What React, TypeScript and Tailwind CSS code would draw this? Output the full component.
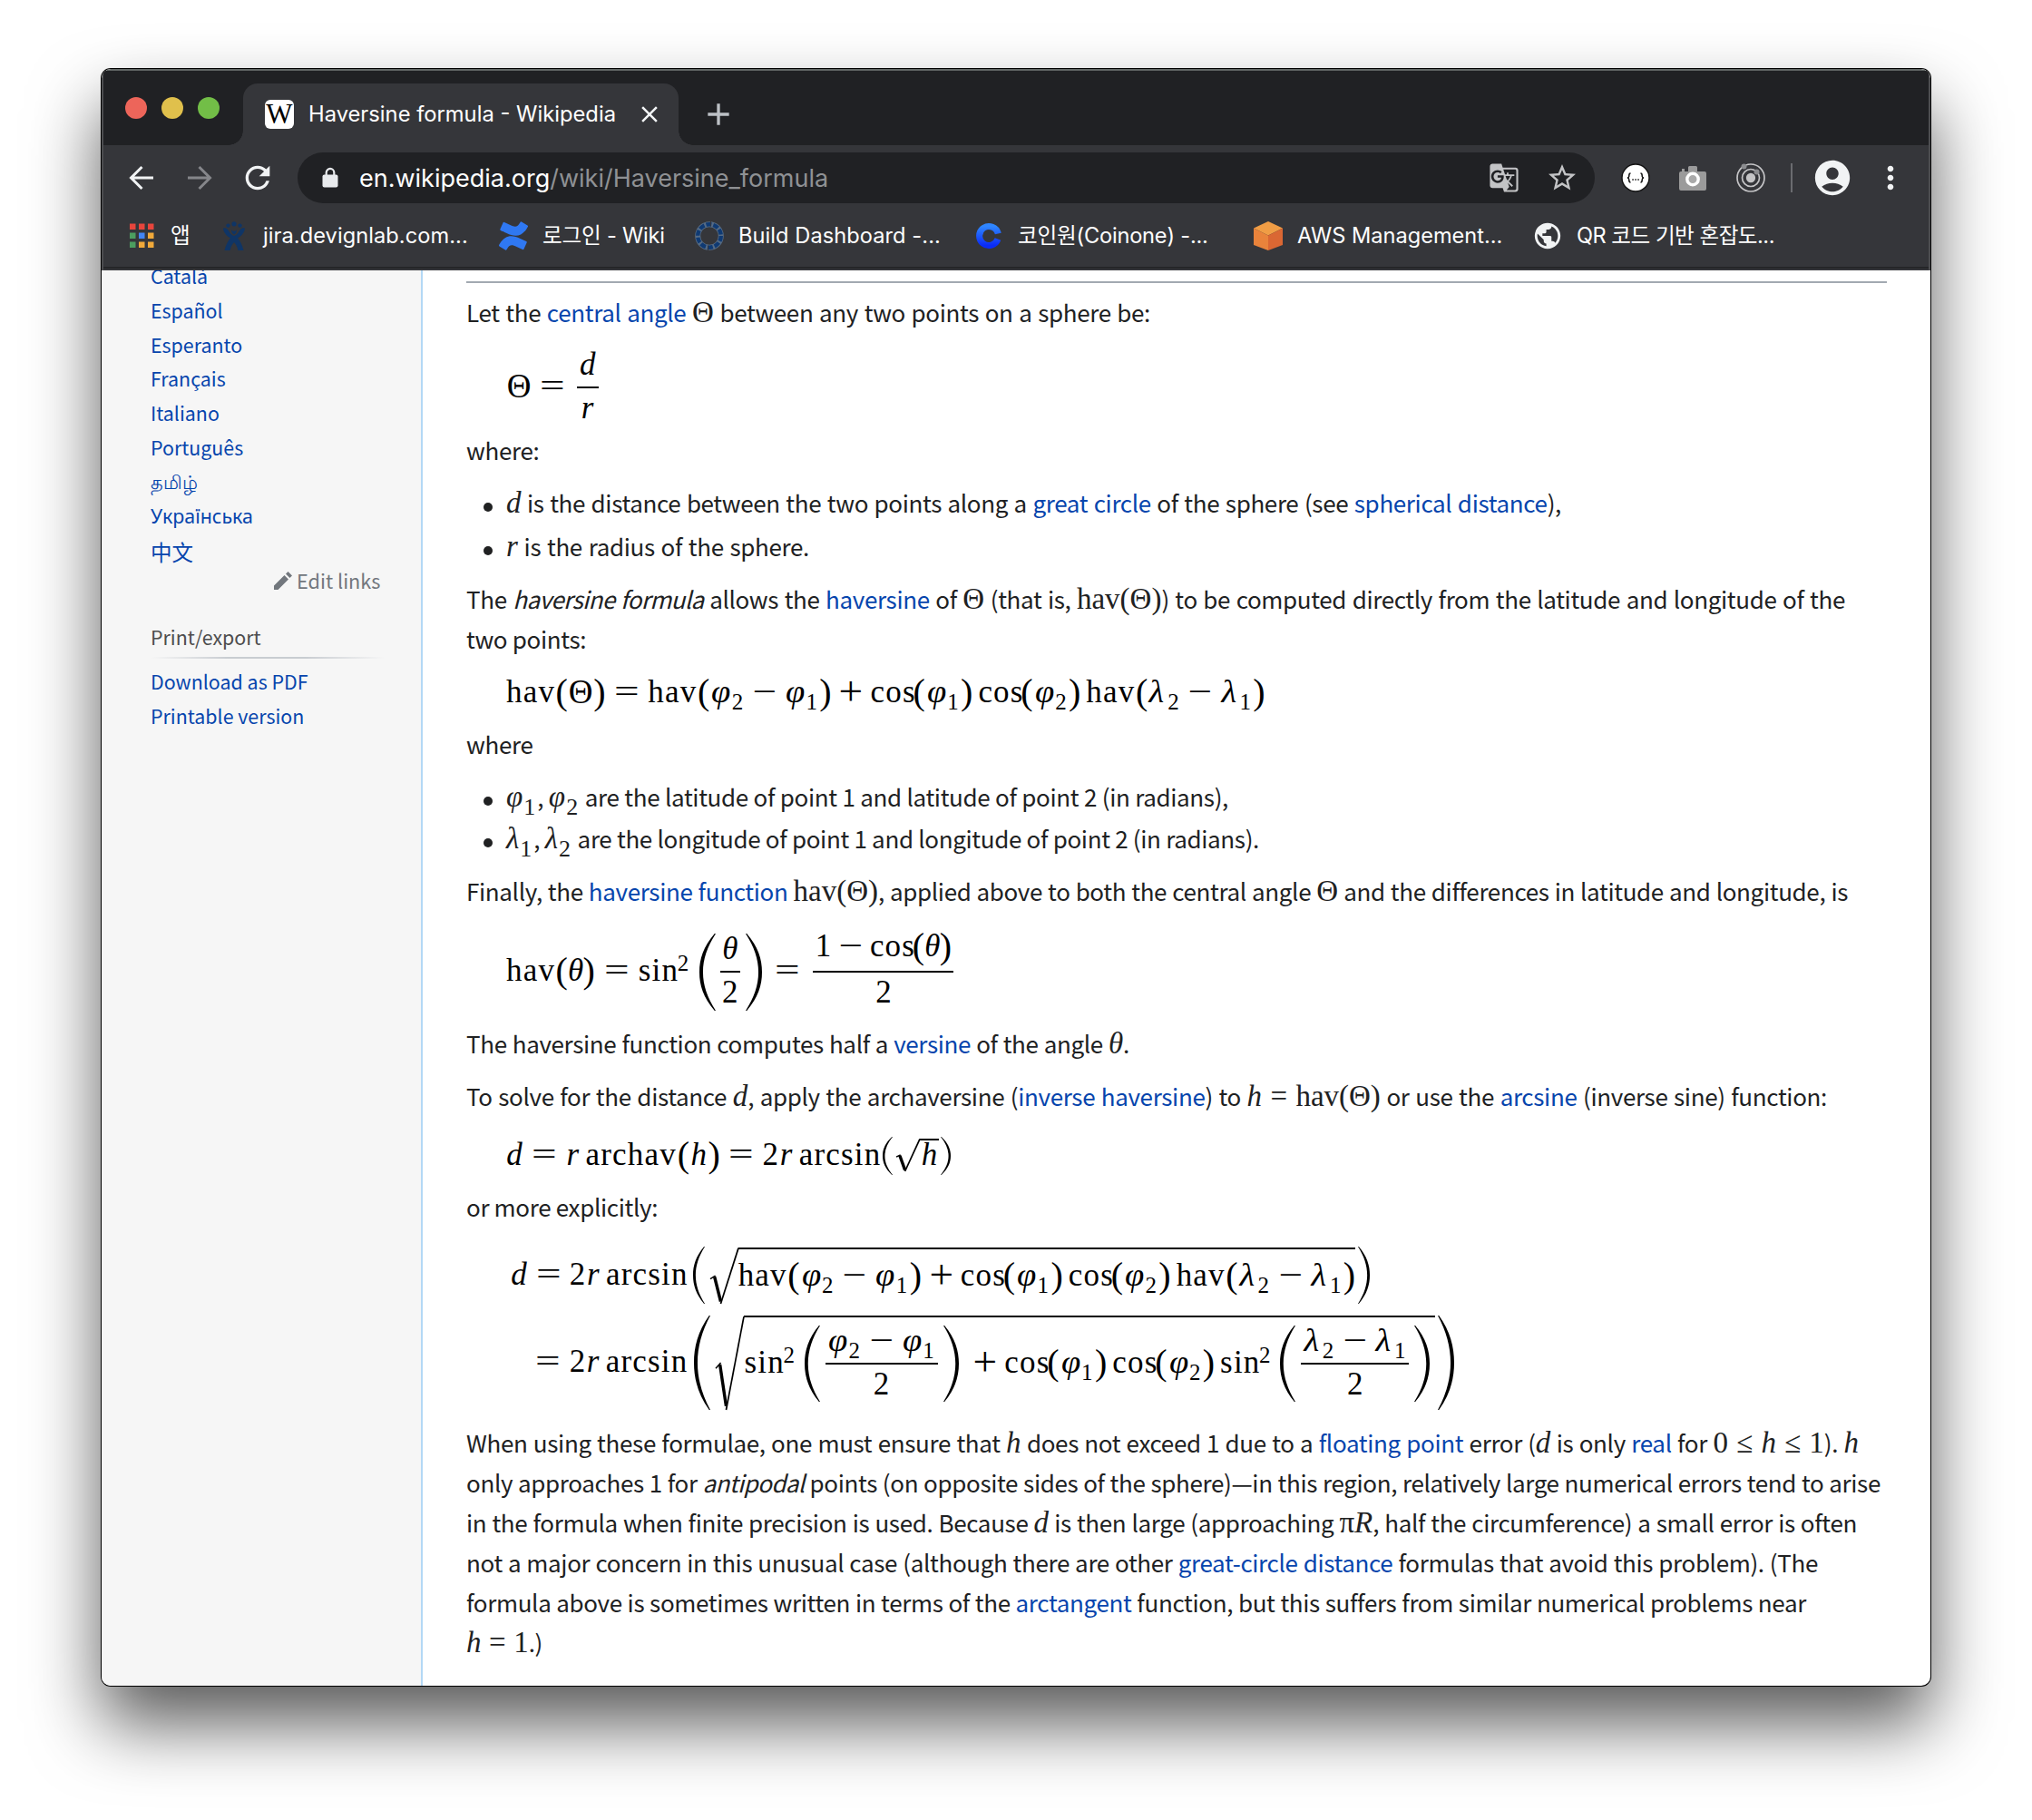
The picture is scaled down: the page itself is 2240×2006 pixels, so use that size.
import type { ReactNode } from 'react';
import { MdAccountCircle, MdAdd, MdClose, MdGTranslate, MdMoreVert, MdPublic, MdRefresh, MdStarBorder } from 'react-icons/md';
import { SiConfluence } from 'react-icons/si';

type Kids = { children?: ReactNode };

/* ---------- browser chrome ---------- */

function TabStrip() {
  return (
    <div className="flex h-[82px] bg-[#202124] pl-6">
      <div className="flex items-center gap-4">
        <span className="size-6 rounded-full bg-[#ed655a]" />
        <span className="size-6 rounded-full bg-[#e0c04c]" />
        <span className="size-6 rounded-full bg-[#72be47]" />
      </div>
      <div className="relative ml-[26px] flex h-[68px] w-[480px] items-center self-end rounded-t-2xl bg-[#35363a] pl-6">
        <span className="absolute bottom-0 -left-4 size-4 bg-[radial-gradient(circle_at_0_0,transparent_15.5px,#35363a_16px)]" />
        <span className="absolute -right-4 bottom-0 size-4 bg-[radial-gradient(circle_at_100%_0,transparent_15.5px,#35363a_16px)]" />
        <span className="flex size-8 items-center justify-center rounded-md bg-white font-['Liberation_Serif',serif] text-[31px] leading-8 text-black">
          W
        </span>
        <span className="ml-4 w-[361px] text-[23.75px] whitespace-nowrap text-white">Haversine formula - Wikipedia</span>
        <MdClose className="size-[30px] text-[#f1f3f4]" />
      </div>
      <MdAdd className="mt-[28px] ml-6 size-10 text-[#bdc1c6]" />
    </div>
  );
}

function Arrow({ look }: { look: string }) {
  return (
    <svg viewBox="0 0 40 40" className={`size-10 ${look}`} fill="none" stroke="currentColor" strokeWidth="3">
      <path d="M20.500 8 8.500 20l12 12M8.500 20H33" />
    </svg>
  );
}

function Lock() {
  return (
    <svg viewBox="0 0 20 24" className="ml-[26px] h-6 w-5" fill="none">
      <rect x="1.5" y="8.5" width="17" height="14" rx="2" fill="#e8eaed" />
      <path d="M5.7 9V6.2a4.3 4.3 0 0 1 8.6 0V9" stroke="#e8eaed" strokeWidth="2.2" />
    </svg>
  );
}

function Toolbar() {
  return (
    <div className="flex h-[72px] items-center pl-[22px]">
      <div className="flex gap-6 text-[#f1f3f4]">
        <Arrow look="text-[#f1f3f4]" />
        <Arrow look="-scale-x-100 text-[#85868a]" />
        <MdRefresh className="size-10" />
      </div>
      <div className="ml-6 flex h-14 w-[1430px] items-center rounded-full bg-[#202124] pr-[18px]">
        <Lock />
        <span className="ml-[22px] pt-0.5 text-[27px] whitespace-nowrap text-[#8f9194]">
          <span className="text-white">en.wikipedia.org</span>/wiki/Haversine_formula
        </span>
        <MdGTranslate className="ml-auto size-[34px] text-[#c3c4c6]" />
        <MdStarBorder className="ml-[29px] size-9 text-[#c3c4c6]" />
      </div>
      <svg viewBox="0 0 32 32" className="ml-[29px] size-8">
        <circle cx="16" cy="16" r="15" fill="#fff" stroke="#111" strokeWidth="1.4" />
        <path
          d="M10.5 11c-2.2 0-1.5 2.4-1.8 3.6-.2.9-1 1.3-1.7 1.4.7.1 1.500.5 1.700 1.400.3 1.200-.4 3.600 1.800 3.600M21.500 11c2.200 0 1.500 2.400 1.800 3.600.2.9 1 1.300 1.700 1.400-.7.1-1.500.5-1.700 1.400-.3 1.200.4 3.600-1.800 3.600"
          fill="none"
          stroke="#111"
          strokeWidth="1.5"
        />
        <path d="M12.300 18h1.500M15.300 18h1.500M18.300 18h1.500" stroke="#111" strokeWidth="1.5" />
      </svg>
      <svg viewBox="0 0 32 32" className="ml-[31px] size-8">
        <path
          d="M4 9V6h3v3h4V4.500Q11 3 12.500 3h7Q21 3 21 4.500V9h8q2 0 2 2v17q0 2-2 2H3q-2 0-2-2V11q0-2 2-2z"
          fill="#9b9b9b"
        />
        <circle cx="16" cy="17.500" r="6.200" fill="#a9a9a9" stroke="#fff" strokeWidth="3.400" />
      </svg>
      <svg viewBox="0 0 32 32" className="ml-8 size-8" fill="none" stroke="#c4c4c6" strokeWidth="1.700">
        <circle cx="16" cy="16" r="15" />
        <circle cx="16" cy="16" r="9.500" />
        <circle cx="16" cy="16" r="4.300" fill="#c4c4c6" />
        <circle cx="8.500" cy="3.500" r="3" fill="#8b8c8f" stroke="none" />
        <circle cx="22.500" cy="9.500" r="3" fill="#8b8c8f" stroke="none" />
      </svg>
      <span className="ml-7 h-8 w-0.5 bg-[#6b6c70]" />
      <MdAccountCircle className="ml-[21px] size-[46px] text-[#f1f3f4]" />
      <MdMoreVert className="ml-[21px] size-10 text-[#f1f3f4]" />
    </div>
  );
}

const appDots = ['#e8453c', '#e8453c', '#e8453c', '#4c9e60', '#4285f4', '#f0a93a', '#4c9e60', '#f0a93a', '#f0a93a'];

function AppsIcon() {
  return (
    <svg viewBox="0 0 32 32" className="size-8">
      {appDots.map((c, i) => (
        <rect key={i} x={3 + (i % 3) * 10} y={2.5 + Math.floor(i / 3) * 10} width="6.500" height="6.500" fill={c} />
      ))}
    </svg>
  );
}

function JiraIcon() {
  return (
    <svg viewBox="0 0 32 32" className="size-8" fill="#0f3566">
      <circle cx="16" cy="2.800" r="2.600" />
      <circle cx="9.500" cy="4.600" r="2.200" />
      <circle cx="22.500" cy="4.600" r="2.200" />
      <path d="M4 7.500q4-1.500 6.500 3.500 2 4 5.500 5 3.500-1 5.500-5 2.500-5 6.500-3.500-.5 6.500-8 11 4.500 5 6.500 13.500h-6q-1.500-6-4.500-9-3 3-4.500 9H5.500q2-8.500 6.500-13.500-7.500-4.500-8-11z" />
      <path d="M13 9.500q3 2.500 6 0 0 3.500-3 5-3-1.500-3-5z" />
    </svg>
  );
}

function BambooIcon() {
  return (
    <svg viewBox="0 0 32 32" className="size-8" fill="none">
      <circle cx="16" cy="16" r="12.800" stroke="#566b84" strokeWidth="6" />
      <circle cx="16" cy="16" r="12.800" stroke="#0f3a73" strokeWidth="4.400" strokeDasharray="6.042 2" />
      <path d="M17.500 0v5.500M14.500 26.500V32" stroke="#35363a" strokeWidth="1" />
    </svg>
  );
}

function CoinoneIcon() {
  return (
    <svg viewBox="0 0 32 32" className="size-8" fill="none">
      <defs>
        <linearGradient id="coin" x1="0" y1="0" x2="0" y2="1">
          <stop offset="0" stopColor="#2f86ff" />
          <stop offset="1" stopColor="#0a2bf5" />
        </linearGradient>
      </defs>
      <path d="M26.300 13.500A10.500 10.500 0 1 0 26 19.500" stroke="url(#coin)" strokeWidth="7" />
    </svg>
  );
}

function AwsIcon() {
  return (
    <svg viewBox="0 0 32 32" className="size-8">
      <path d="M16 0 32 7.500 16 15.500 0 7.500z" fill="#f09d45" />
      <path d="M0 7.500 16 15.500V32L0 26z" fill="#e9833b" />
      <path d="M32 7.500 16 15.500V32l16-6z" fill="#da6733" />
    </svg>
  );
}

function Bookmark({ icon, label, box }: { icon: ReactNode; label: string; box: string }) {
  return (
    <div className={`flex shrink-0 items-center gap-4 ${box}`}>
      {icon}
      <span className="whitespace-nowrap">{label}</span>
    </div>
  );
}

function BookmarksBar() {
  return (
    <div className="flex h-16 items-center border-b-2 border-[#252628] pb-1.5 pl-[26px] text-[23.6px] text-white">
      <Bookmark icon={<AppsIcon />} label="앱" box="w-[102px]" />
      <Bookmark icon={<JiraIcon />} label="jira.devignlab.com..." box="w-[308px] tracking-[0.07px]" />
      <Bookmark icon={<SiConfluence className="size-8 text-[#2f78f2]" />} label="로그인 - Wiki" box="w-[216px] tracking-[-0.2px]" />
      <Bookmark icon={<BambooIcon />} label="Build Dashboard -..." box="w-[308px] tracking-[0.07px]" />
      <Bookmark icon={<CoinoneIcon />} label="코인원(Coinone) -..." box="w-[308px] tracking-[-0.2px]" />
      <Bookmark icon={<AwsIcon />} label="AWS Management..." box="w-[308px]" />
      <Bookmark
        icon={<MdPublic className="-m-px size-[34px] text-[#f1f3f4]" />}
        label="QR 코드 기반 혼잡도..."
        box="w-[308px] tracking-[-0.5px]"
      />
    </div>
  );
}

/* ---------- sidebar ---------- */

const languages = ['Català', 'Español', 'Esperanto', 'Français', 'Italiano', 'Português'];

function Pencil() {
  return (
    <svg viewBox="0 0 20 20" className="mr-[5px] size-5" fill="#72777d">
      <path d="M0 15.500 11.500 4 16 8.500 4.500 20H0zM13 2.600 15.600 0 20 4.400 17.400 7z" />
    </svg>
  );
}

function Sidebar() {
  return (
    <aside className="w-[354px] shrink-0 overflow-hidden border-r-2 border-[#b3d8f5] bg-[#f6f6f6] pl-[54px] text-[21.4px] leading-[37.8px] text-[#0645ad]">
      <ul className="-mt-[13px]">
        {languages.map((l) => (
          <li key={l}>{l}</li>
        ))}
        <li className="h-[37.8px] font-['Noto_Sans',sans-serif]">தமிழ்</li>
        <li className="h-[37.8px] font-['Noto_Sans',sans-serif]">Українська</li>
        <li className="h-[37.8px] pt-[3px] font-['Noto_Sans_CJK_SC',sans-serif] text-[23.5px]">中文</li>
      </ul>
      <div className="-mt-1 ml-[136px] flex items-center text-[21.7px] text-[#72777d]">
        <Pencil />
        Edit links
      </div>
      <h3 className="mt-6 text-[#4d4d4d]">Print/export</h3>
      <div className="mt-[3px] h-0.5 w-[258px] bg-[linear-gradient(to_right,transparent,#c8ccd1_33%,#c8ccd1_66%,transparent)]" />
      <ul className="mt-1.5">
        <li>Download as PDF</li>
        <li>Printable version</li>
      </ul>
    </aside>
  );
}

/* ---------- article text ---------- */

function Line({ w, children }: Kids & { w: string }) {
  return (
    <div className={`h-11 leading-[44px] tracking-[-0.35px] whitespace-nowrap [text-align-last:justify] ${w}`}>{children}</div>
  );
}

function Item({ w, children }: Kids & { w: string }) {
  return (
    <li className="flex">
      <span className="mt-[22px] mr-[15px] ml-[19px] size-2.5 shrink-0 rounded-full bg-[#202122]" />
      <Line w={w}>{children}</Line>
    </li>
  );
}

const A = ({ children }: Kids) => <a className="text-[#0645ad]">{children}</a>;
const Em = ({ children }: Kids) => <i className="tracking-[-0.6px]">{children}</i>;
const M = ({ children }: Kids) => (
  <span className="font-['Liberation_Serif',serif] text-[33px] leading-[0] tracking-normal">{children}</span>
);
const LowSub = ({ children }: Kids) => (
  <span className="relative top-[9px] mr-0.5 ml-px text-[26px] leading-[0]">{children}</span>
);

/* ---------- display math ---------- */

const Block = ({ box, children }: Kids & { box: string }) => (
  <div className={`flex items-center pl-11 font-['Liberation_Serif',serif] text-[35px] text-black ${box}`}>{children}</div>
);
/* a stretch of symbols whose math axis sits on the block's centre line */
const Run = ({ children }: Kids) => <span className="flex h-11 -translate-y-px leading-[44px]">{children}</span>;
const Fn = ({ w, children }: Kids & { w: string }) => (
  <span className={`block tracking-[0.034em] whitespace-nowrap ${w}`}>{children}</span>
);
const Sym = ({ w, children }: Kids & { w: string }) => <span className={`block text-center ${w}`}>{children}</span>;
const It = ({ w, children }: Kids & { w: string }) => <span className={`block text-center italic ${w}`}>{children}</span>;
const Par = ({ children }: Kids) => (
  <span className="flex w-[0.389em] justify-center">
    <span className="text-[40px]">{children}</span>
  </span>
);
const Eq = () => (
  <span className="mx-[0.278em] block w-[0.778em] text-center">
    <span className="inline-block scale-x-[1.4]">=</span>
  </span>
);
const Minus = () => (
  <span className="mx-[0.222em] block w-[0.778em] text-center">
    <span className="inline-block scale-x-[1.35]">−</span>
  </span>
);
const Plus = () => (
  <span className="mx-[0.222em] block w-[0.778em] text-center">
    <span className="inline-block origin-[50%_57%] scale-[1.35]">+</span>
  </span>
);
const Theta = () => (
  <span className="flex w-[0.8em] justify-center">
    <span className="text-[37px]">Θ</span>
  </span>
);
const Sub = ({ children }: Kids) => (
  <span className="block w-[0.42em] translate-y-[8px]">
    <span className="text-[25px]">{children}</span>
  </span>
);
const Sup = ({ children }: Kids) => (
  <span className="block w-[0.404em] -translate-y-[11px]">
    <span className="text-[25px]">{children}</span>
  </span>
);
const Phi = ({ n }: { n: string }) => (
  <>
    <span className="block w-[0.695em] origin-left scale-x-110 pl-[0.05em] italic">φ</span>
    <Sub>{n}</Sub>
  </>
);
const Lam = ({ n }: { n: string }) => (
  <>
    <span className="block w-[0.625em] origin-left scale-x-110 pl-[0.04em] italic">λ</span>
    <Sub>{n}</Sub>
  </>
);

function Big({ box, right = false }: { box: string; right?: boolean }) {
  return (
    <svg viewBox="0 0 100 1000" preserveAspectRatio="none" className={`shrink-0 ${right ? '-scale-x-100' : ''} ${box}`}>
      <path d="M93 0C24 170 0 330 0 500s24 330 93 500h7C48 830 22 670 22 500S48 170 100 0z" fill="#000" />
    </svg>
  );
}

function Frac({ w, num, den, lift = '-translate-y-[2px]' }: { w: string; num: ReactNode; den: ReactNode; lift?: string }) {
  return (
    <span className={`flex flex-col items-center leading-[44px] ${w}`}>
      <span className={`flex h-11 ${lift}`}>{num}</span>
      <span className="h-0.5 w-full bg-black" />
      <span className="flex h-11">{den}</span>
    </span>
  );
}

function Sqrt({ h, tick, children }: Kids & { h: string; tick: string }) {
  return (
    <span className={`flex ${h}`}>
      <svg viewBox="0 0 100 100" preserveAspectRatio="none" className={`h-full overflow-visible ${tick}`} fill="none" stroke="#000">
        <path d="M0 56 18 50" strokeWidth="1.500" vectorEffect="non-scaling-stroke" />
        <path d="M15 52 37 96" strokeWidth="3.400" vectorEffect="non-scaling-stroke" />
        <path d="M37 100 100 1" strokeWidth="1.700" vectorEffect="non-scaling-stroke" />
      </svg>
      <span className="flex h-full items-center border-t-2 border-black">{children}</span>
    </span>
  );
}

const CosCos = () => (
  <>
    <Fn w="w-[1.338em]">cos</Fn>
    <Par>(</Par>
    <Phi n="1" />
    <Par>)</Par>
    <Fn w="ml-[0.167em] w-[1.338em]">cos</Fn>
    <Par>(</Par>
    <Phi n="2" />
    <Par>)</Par>
    <span className="w-[0.167em]" />
  </>
);

const HavSum = () => (
  <Run>
    <Fn w="w-[1.556em]">hav</Fn>
    <Par>(</Par>
    <Phi n="2" />
    <Minus />
    <Phi n="1" />
    <Par>)</Par>
    <Plus />
    <CosCos />
    <Fn w="w-[1.556em]">hav</Fn>
    <Par>(</Par>
    <Lam n="2" />
    <Minus />
    <Lam n="1" />
    <Par>)</Par>
  </Run>
);

const TwoRArcsin = () => (
  <>
    <Sym w="w-[0.5em]">2</Sym>
    <It w="w-[0.479em]">r</It>
    <Fn w="ml-[0.167em] w-[2.564em]">arcsin</Fn>
  </>
);

function Article() {
  return (
    <main className="w-[1566px] pt-3 text-[26px] text-[#202122]">
      <div className="h-0.5 w-full bg-[#a2a9b1]" />
      <div className="h-[10px]" />
      <Line w="w-[754px]">
        Let the <A>central angle</A> <M>Θ</M> between any two points on a sphere be:
      </Line>
      <Block box="h-[108px] pt-[14px]">
        <Run>
          <Theta />
          <Eq />
        </Run>
        <Frac w="ml-[3px] w-6" num={<It w="">d</It>} den={<It w="">r</It>} />
      </Block>
      <Line w="w-[80px]">where:</Line>
      <ul className="mt-[14px] space-y-1">
        <Item w="w-[1163px]">
          <M><i>d</i></M> is the distance between the two points along a <A>great circle</A> of the sphere (see{' '}
          <A>spherical distance</A>),
        </Item>
        <Item w="w-[334px]">
          <M><i>r</i></M> is the radius of the sphere.
        </Item>
      </ul>
      <div className="mt-[14px]">
        <Line w="w-[1520px]">
          The <Em>haversine formula</Em> allows the <A>haversine</A> of <M>Θ</M> (that is, <M>hav(Θ)</M>) to be computed directly
          from the latitude and longitude of the
        </Line>
        <Line w="w-[132px]">two points:</Line>
      </div>
      <Block box="h-[72px] pt-1">
        <Run>
          <Fn w="w-[1.556em]">hav</Fn>
          <Par>(</Par>
          <Theta />
          <Par>)</Par>
          <Eq />
        </Run>
        <HavSum />
      </Block>
      <Line w="w-[73px]">where</Line>
      <ul className="mt-[14px] space-y-0.5">
        <Item w="w-[796px]">
          <M><i>φ</i><LowSub>1</LowSub></M>, <M><i>φ</i><LowSub>2</LowSub></M> are the latitude of point 1 and latitude of point 2
          (in radians),
        </Item>
        <Item w="w-[830px]">
          <M><i>λ</i><LowSub>1</LowSub></M>, <M><i>λ</i><LowSub>2</LowSub></M> are the longitude of point 1 and longitude of point
          2 (in radians).
        </Item>
      </ul>
      <div className="mt-[14px]">
        <Line w="w-[1523px]">
          Finally, the <A>haversine function</A> <M>hav(Θ)</M>, applied above to both the central angle <M>Θ</M> and the
          differences in latitude and longitude, is
        </Line>
      </div>
      <Block box="h-[124px] pt-[10px]">
        <Run>
          <Fn w="w-[1.556em]">hav</Fn>
          <Par>(</Par>
          <It w="w-[0.469em]">θ</It>
          <Par>)</Par>
          <Eq />
          <Fn w="ml-px w-[1.228em]">sin</Fn>
          <Sup>2</Sup>
        </Run>
        <Big box="ml-[10px] h-[85px] w-[18px]" />
        <Frac w="ml-[5px] w-[22px]" num={<It w="">θ</It>} den="2" />
        <Big box="ml-[6px] h-[85px] w-[18px]" right />
        <span className="ml-[5px]">
          <Run>
            <Eq />
          </Run>
        </span>
        <Frac
          w="ml-[5px] w-[155px]"
          lift="-translate-y-[5px]"
          num={
            <>
              <Sym w="w-[0.5em]">1</Sym>
              <Minus />
              <Fn w="w-[1.338em]">cos</Fn>
              <Par>(</Par>
              <It w="w-[0.469em]">θ</It>
              <Par>)</Par>
            </>
          }
          den="2"
        />
      </Block>
      <Line w="w-[731px]">
        The haversine function computes half a <A>versine</A> of the angle <M><i>θ</i></M>.
      </Line>
      <div className="mt-[14px]">
        <Line w="w-[1500px]">
          To solve for the distance <M><i>d</i></M>, apply the archaversine (<A>inverse haversine</A>) to{' '}
          <M><i>h</i> = hav(Θ)</M> or use the <A>arcsine</A> (inverse sine) function:
        </Line>
      </div>
      <Block box="h-[78px] pt-[9px]">
        <Run>
          <It w="w-[0.52em]">d</It>
          <Eq />
          <It w="w-[0.479em]">r</It>
          <Fn w="ml-[0.167em] w-[2.89em]">archav</Fn>
          <Par>(</Par>
          <It w="w-[0.576em]">h</It>
          <Par>)</Par>
          <Eq />
          <TwoRArcsin />
        </Run>
        <Big box="ml-[3px] h-[42px] w-[11px]" />
        <span className="ml-1 -translate-y-px">
          <Sqrt h="h-9" tick="w-[26px]">
            <Run>
              <It w="w-[0.576em]">h</It>
            </Run>
          </Sqrt>
        </span>
        <Big box="ml-[2px] h-[42px] w-[11px]" right />
      </Block>
      <Line w="w-[211px]">or more explicitly:</Line>
      <Block box="h-24 pt-[11px]">
        <span className="ml-[5px]">
          <Run>
            <It w="w-[0.52em]">d</It>
            <Eq />
            <TwoRArcsin />
          </Run>
        </span>
        <Big box="ml-[6px] h-[63px] w-[13px]" />
        <span className="ml-1.5">
          <Sqrt h="h-[62px]" tick="w-[31px]">
            <HavSum />
          </Sqrt>
        </span>
        <Big box="ml-[3px] h-[63px] w-[13px]" right />
      </Block>
      <Block box="h-[108px]">
        <span className="ml-[23px]">
          <Run>
            <Eq />
            <TwoRArcsin />
          </Run>
        </span>
        <Big box="ml-[8px] h-[104px] w-[18px]" />
        <span className="ml-1.5">
          <Sqrt h="h-[104px]" tick="w-[31px]">
            <Run>
              <Fn w="w-[1.228em]">sin</Fn>
              <Sup>2</Sup>
            </Run>
            <Big box="ml-[9px] h-[84px] w-[17px]" />
            <Frac
              w="ml-1.5 w-[124px]"
              num={
                <>
                  <Phi n="2" />
                  <Minus />
                  <Phi n="1" />
                </>
              }
              den="2"
            />
            <Big box="ml-1.5 h-[84px] w-[17px]" right />
            <span className="ml-2">
              <Run>
                <Plus />
                <CosCos />
                <Fn w="w-[1.228em]">sin</Fn>
                <Sup>2</Sup>
              </Run>
            </span>
            <Big box="ml-[9px] h-[84px] w-[17px]" />
            <Frac
              w="ml-1.5 w-[119px]"
              num={
                <>
                  <Lam n="2" />
                  <Minus />
                  <Lam n="1" />
                </>
              }
              den="2"
            />
            <Big box="mr-[6px] ml-1.5 h-[84px] w-[17px]" right />
          </Sqrt>
        </span>
        <Big box="ml-[3px] h-[104px] w-[18px]" right />
      </Block>
      <div className="pt-3">
        <Line w="w-[1535px]">
          When using these formulae, one must ensure that <M><i>h</i></M> does not exceed 1 due to a <A>floating point</A> error (
          <M><i>d</i></M> is only <A>real</A> for <M>0 ≤ <i>h</i> ≤ 1</M>). <M><i>h</i></M>
        </Line>
        <Line w="w-[1559px]">
          only approaches 1 for <Em>antipodal</Em> points (on opposite sides of the sphere)—in this region, relatively large
          numerical errors tend to arise
        </Line>
        <Line w="w-[1533px]">
          in the formula when finite precision is used. Because <M><i>d</i></M> is then large (approaching <M>π<i>R</i></M>, half
          the circumference) a small error is often
        </Line>
        <Line w="w-[1490px]">
          not a major concern in this unusual case (although there are other <A>great-circle distance</A> formulas that avoid this
          problem). (The
        </Line>
        <Line w="w-[1477px]">
          formula above is sometimes written in terms of the <A>arctangent</A> function, but this suffers from similar numerical
          problems near
        </Line>
        <Line w="w-[84px]">
          <M><i>h</i> = 1</M>.)
        </Line>
      </div>
    </main>
  );
}

export default function App() {
  return (
    <div className="h-[2006px] w-[2240px] overflow-hidden bg-white pt-[76px] pl-[112px]">
      <div className="flex h-[1782px] w-[2016px] flex-col overflow-hidden rounded-[10px] bg-white shadow-[0_0_0_1px_#000,0_42px_78px_rgba(0,0,0,0.65)]">
        <header className="h-[222px] shrink-0 rounded-t-[10px] border-x-2 border-t-2 border-[#4c4d50] border-t-[#616665] bg-[#35363a] font-['Inter','Noto_Sans_CJK_KR',sans-serif]">
          <TabStrip />
          <Toolbar />
          <BookmarksBar />
        </header>
        <div className="flex min-h-0 flex-1 font-['Noto_Sans_CJK_KR',sans-serif]">
          <Sidebar />
          <div className="pl-12">
            <Article />
          </div>
        </div>
      </div>
    </div>
  );
}
